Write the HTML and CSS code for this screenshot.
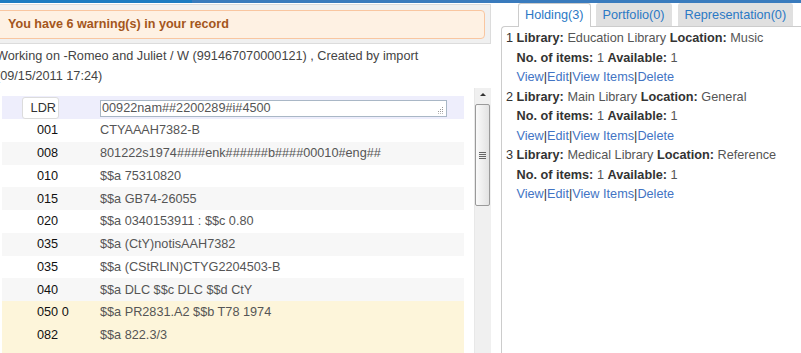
FILE: index.html
```html
<!DOCTYPE html>
<html lang="en">
<head>
  <meta charset="UTF-8">
  <title>Record editor</title>
  <link rel="stylesheet" href="styles.css">
</head>
<body>

<div class="topbar">
  <div class="topbar-left"></div>
  <div class="topbar-right"></div>
</div>

<div class="main">
  <div class="editor">
    <div class="warn-wrap">
      <div class="warn">You have 6 warning(s) in your record</div>
    </div>
    <div class="info">Working on -Romeo and Juliet / W (991467070000121) , Created by import<br>(09/15/2011 17:24)</div>

    <div class="marc">
      <div class="rows">
        <div class="row ldr">
          <span class="ldr-tag">LDR</span>
          <span class="ldr-field">00922nam##2200289#i#4500
            <svg class="grip" width="7" height="7" viewBox="0 0 7 7">
              <rect x="5" y="0" width="1" height="1" fill="#999"/>
              <rect x="3" y="2" width="1" height="1" fill="#999"/>
              <rect x="5" y="2" width="1" height="1" fill="#999"/>
              <rect x="1" y="4" width="1" height="1" fill="#999"/>
              <rect x="3" y="4" width="1" height="1" fill="#999"/>
              <rect x="5" y="4" width="1" height="1" fill="#999"/>
              <rect x="1" y="6" width="1" height="1" fill="#bbb"/>
              <rect x="3" y="6" width="1" height="1" fill="#bbb"/>
              <rect x="5" y="6" width="1" height="1" fill="#bbb"/>
            </svg>
          </span>
        </div>
        <div class="row"><span class="tag">001</span><span class="val">CTYAAAH7382-B</span></div>
        <div class="row alt"><span class="tag">008</span><span class="val">801222s1974####enk######b####00010#eng##</span></div>
        <div class="row"><span class="tag">010</span><span class="val">$$a 75310820</span></div>
        <div class="row alt"><span class="tag">015</span><span class="val">$$a GB74-26055</span></div>
        <div class="row"><span class="tag">020</span><span class="val">$$a 0340153911 : $$c 0.80</span></div>
        <div class="row alt"><span class="tag">035</span><span class="val">$$a (CtY)notisAAH7382</span></div>
        <div class="row"><span class="tag">035</span><span class="val">$$a (CStRLIN)CTYG2204503-B</span></div>
        <div class="row alt"><span class="tag">040</span><span class="val">$$a DLC $$c DLC $$d CtY</span></div>
        <div class="row warned"><span class="tag">050 0</span><span class="val">$$a PR2831.A2 $$b T78 1974</span></div>
        <div class="row warned"><span class="tag">082</span><span class="val">$$a 822.3/3</span></div>
        <div class="row warned"><span class="tag">090</span><span class="val">$$a PR2831.A2 $$b T78</span></div>
      </div>
      <div class="scrollbar">
        <div class="scroll-up"></div>
        <div class="scroll-thumb"><span class="thumb-grip"></span></div>
      </div>
    </div>
  </div>

  <div class="side">
    <div class="tabs">
      <div class="tab active">Holding(3)</div>
      <div class="tab">Portfolio(0)</div>
      <div class="tab">Representation(0)</div>
    </div>
    <div class="panel">
      <div class="holding">
        <div>1 <b>Library:</b> <span class="v">Education Library</span> <b>Location:</b> <span class="v">Music</span></div>
        <div class="sub"><b>No. of items:</b> <span class="v">1</span> <b>Available:</b> <span class="v">1</span></div>
        <div class="sub links"><a href="#">View</a>|<a href="#">Edit</a>|<a href="#">View Items</a>|<a href="#">Delete</a></div>
      </div>
      <div class="holding">
        <div>2 <b>Library:</b> <span class="v">Main Library</span> <b>Location:</b> <span class="v">General</span></div>
        <div class="sub"><b>No. of items:</b> <span class="v">1</span> <b>Available:</b> <span class="v">1</span></div>
        <div class="sub links"><a href="#">View</a>|<a href="#">Edit</a>|<a href="#">View Items</a>|<a href="#">Delete</a></div>
      </div>
      <div class="holding">
        <div>3 <b>Library:</b> <span class="v">Medical Library</span> <b>Location:</b> <span class="v">Reference</span></div>
        <div class="sub"><b>No. of items:</b> <span class="v">1</span> <b>Available:</b> <span class="v">1</span></div>
        <div class="sub links"><a href="#">View</a>|<a href="#">Edit</a>|<a href="#">View Items</a>|<a href="#">Delete</a></div>
      </div>
    </div>
  </div>
</div>

</body>
</html>
```

FILE: styles.css
```css
body {
  margin: 0;
  font-family: "Liberation Sans", Arial, sans-serif;
  font-size: 12.7px;
  color: #333;
  background: #fff;
  height: 353px;
  overflow: hidden;
}
.topbar {
  display: flex;
  height: 3px;
}
.topbar-left {
  width: 192px;
  background: #1a7bc2;
}
.topbar-right {
  flex: 1;
  background: #3a7bbd;
}
.main {
  display: flex;
  height: 350px;
}

/* left: record editor */
.editor {
  width: 491px;
  overflow: hidden;
  flex-shrink: 0;
}
.warn-wrap {
  margin-top: 1px;
  background: #f0f0f0;
  border: 1px solid #dcdcdc;
  border-left: none;
  padding: 5px 5px 4px 0;
}
.warn {
  margin-left: -4px;
  height: 27px;
  line-height: 27px;
  padding-left: 11px;
  background: #fef1e3;
  border: 1px solid #f9c6a0;
  border-radius: 4px;
  color: #a4561c;
  font-weight: bold;
  font-size: 12.6px;
}
.info {
  margin: 2px 0 0 -4px;
  line-height: 20px;
  color: #444;
  white-space: nowrap;
}
.marc {
  display: flex;
  margin-top: 2px;
  height: 265px;
}
.rows {
  width: 462px;
  margin: 0 10px 0 2px;
  padding-top: 8px;
}
.row {
  display: flex;
  align-items: center;
  height: 22.75px;
  white-space: nowrap;
}
.row.alt {
  background: #f7f7f7;
}
.row.warned {
  background: #fdf5da;
}
.tag {
  width: 63px;
  padding-left: 35px;
  color: #111;
}
.val {
  color: #555;
}
.row.ldr {
  height: 23px;
  background: #eeeefc;
  align-items: stretch;
}
.ldr-tag {
  width: 33px;
  margin: 1px 0 0 20px;
  border: 1px solid #dcdcdc;
  border-radius: 3px;
  background: #fff;
  color: #333;
  text-align: right;
  padding-right: 2px;
  line-height: 20px;
}
.ldr-field {
  position: relative;
  margin: 4px 0 0 41px;
  width: 344px;
  height: 15px;
  line-height: 15px;
  border: 1px solid #a9b7c6;
  background: #fff;
  color: #555;
  padding-left: 1px;
}
.grip {
  position: absolute;
  right: 2px;
  bottom: 2px;
}

/* fake scrollbar */
.scrollbar {
  width: 17px;
  background: #f0f0f0;
  border-left: 1px solid #e8e8e8;
  box-sizing: border-box;
}
.scroll-up {
  height: 15px;
  position: relative;
}
.scroll-up::after {
  content: "";
  position: absolute;
  left: 5px;
  top: 5px;
  border-left: 3px solid transparent;
  border-right: 3px solid transparent;
  border-bottom: 3px solid #333;
}
.scroll-thumb {
  display: flex;
  align-items: center;
  justify-content: center;
  margin: 1px 1px 0 0;
  height: 100px;
  border: 1px solid #9a9a9a;
  border-radius: 2px;
  background: linear-gradient(to right, #fafafa, #e2e2e2);
}
.thumb-grip {
  width: 7px;
  height: 7px;
  background: repeating-linear-gradient(to bottom, #666 0, #666 1px, transparent 1px, transparent 2px);
}

/* right: tabs */
.side {
  flex: 1;
  padding-left: 10px;
  overflow: hidden;
}
.tabs {
  display: flex;
  padding-left: 17px;
  white-space: nowrap;
}
.tab {
  height: 22px;
  line-height: 23px;
  padding: 0 6px;
  margin-right: 5px;
  border: 1px solid #e0e0e0;
  border-bottom: none;
  border-radius: 3px 3px 0 0;
  background: #e0e0e0;
  color: #2b79c5;
}
.tab.active {
  background: #fff;
  border-color: #ccc;
  height: 23px;
  margin-bottom: -1px;
  position: relative;
}
.tab + .tab + .tab {
  margin-left: 1px;
}
.panel {
  border-top: 1px solid #ccc;
  border-left: 1px solid #ccc;
  border-top-left-radius: 4px;
  padding: 2px 0 0 4px;
  height: 330px;
  line-height: 19.5px;
  white-space: nowrap;
}
.panel b {
  color: #333;
}
.panel .v {
  color: #555;
}
.sub {
  padding-left: 10.5px;
}
.links {
  color: #333;
}
.links a {
  color: #4274c4;
  text-decoration: none;
}
```
